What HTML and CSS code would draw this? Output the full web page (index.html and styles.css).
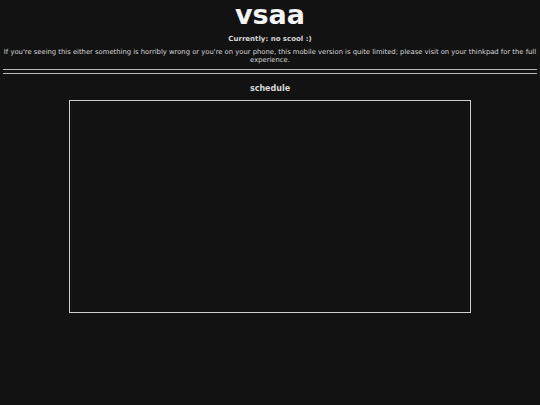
FILE: index.html
```html
<!DOCTYPE html>
<html>
<head>
<meta charset="utf-8">
<link rel="stylesheet" href="styles.css">
</head>
<body>
<h1 class="title">vsaa</h1>
<p class="status">Currently: no scool :)</p>
<p class="notice">If you're seeing this either something is horribly wrong or you're on your phone, this mobile version is quite limited; please visit on your thinkpad for the full experience.</p>
<div class="rule"></div>
<h2 class="section">schedule</h2>
<div class="frame"></div>
</body>
</html>
```

FILE: styles.css
```css
html, body {
  background: #121212;
}
body {
  margin: 0 3px;
  font-family: "DejaVu Sans", sans-serif;
  color: #d8d8d8;
  text-align: center;
}
.title {
  margin: 0;
  padding-top: 0;
  font-size: 27px;
  line-height: 30px;
  font-weight: bold;
  color: #f4f4f4;
}
.status {
  margin: 5px 0 0;
  font-size: 7px;
  line-height: 9px;
  font-weight: bold;
}
.notice {
  margin: 4px 0 0;
  font-size: 6.8px;
  line-height: 8px;
}
.rule {
  margin-top: 5px;
  height: 3px;
  border-top: 1px solid #b8b8b8;
  border-bottom: 1px solid #b8b8b8;
}
.section {
  margin: 10px 0 0;
  font-size: 8px;
  line-height: 10px;
  font-weight: bold;
}
.frame {
  margin: 6px auto 0;
  width: 400px;
  height: 211px;
  border: 1px solid #cfcfcf;
}
```
